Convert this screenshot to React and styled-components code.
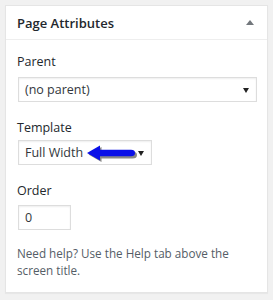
import React from 'react';
import styled, { createGlobalStyle } from 'styled-components';

const GlobalStyle = createGlobalStyle`
  body {
    margin: 0;
    background: #f1f1f1;
    font-family: "Open Sans", "Noto Sans", sans-serif;
    color: #444;
  }
`;

const Page = styled.div`
  padding: 5px 5px 0 5px;
  height: 300px;
  box-sizing: border-box;
`;

const Postbox = styled.div`
  background: #fff;
  border: 1px solid #e5e5e5;
  box-shadow: 0 1px 1px rgba(0, 0, 0, 0.04);
  width: 263px;
  box-sizing: border-box;
`;

const Header = styled.div`
  display: flex;
  align-items: center;
  justify-content: space-between;
  height: 33px;
  padding: 0 12px 0 11px;
  border-bottom: 1px solid #eee;
`;

const Title = styled.h2`
  margin: 0;
  font-size: 13px;
  font-weight: 600;
  color: #23282d;
`;

const Toggle = styled.span`
  width: 0;
  height: 0;
  border-left: 4px solid transparent;
  border-right: 4px solid transparent;
  border-bottom: 5px solid #72777c;
  margin-right: 1px;
`;

const Inside = styled.div`
  padding: 13px 11px 13px 12px;
`;

const Label = styled.p`
  margin: ${(p) => p.$top || 0}px 0 ${(p) => p.$bottom || 7}px -1px;
  font-size: 12.5px;
  line-height: 18px;
  color: #23282d;
`;

const FieldWrap = styled.div`
  position: relative;
  width: ${(p) => p.$width}px;
`;

const Select = styled.div`
  display: flex;
  align-items: center;
  justify-content: space-between;
  width: ${(p) => p.$width}px;
  height: 25px;
  box-sizing: border-box;
  border: 1px solid #ddd;
  box-shadow: inset 0 1px 2px rgba(0, 0, 0, 0.07);
  padding: 0 7px 0 6px;
  font-size: 12.5px;
  color: #32373c;
  background: #fff;
`;

const Caret = styled.span`
  width: 0;
  height: 0;
  border-left: 3px solid transparent;
  border-right: 3px solid transparent;
  border-top: 5px solid #222;
  margin-top: 1px;
`;

const Input = styled.div`
  width: 53px;
  height: 25px;
  box-sizing: border-box;
  border: 1px solid #ddd;
  box-shadow: inset 0 1px 2px rgba(0, 0, 0, 0.07);
  padding: 0 6px;
  display: flex;
  align-items: center;
  font-size: 12.5px;
  color: #32373c;
`;

const Help = styled.p`
  margin: 15px 0 0 -1px;
  font-size: 11.7px;
  line-height: 17px;
  color: #555d66;
`;

const Pointer = styled.svg`
  position: absolute;
  left: 67px;
  top: 4px;
`;

const BlueArrow = () => (
  <Pointer width="54" height="21" viewBox="0 0 54 21">
    <path
      d="M2 9 L15 1.5 L15 6 L46 6 Q50.5 6 50.5 9.5 Q50.5 13 46 13 L15 13 L15 16.5 Z"
      fill="#111"
      opacity="0.5"
      transform="translate(1.5 1.5)"
    />
    <path
      d="M2 9 L15 1.5 L15 5.8 L46 5.8 Q50 5.8 50 9 Q50 12.2 46 12.2 L15 12.2 L15 16.5 Z"
      fill="#0a10e8"
    />
  </Pointer>
);

const App = () => (
  <Page>
    <GlobalStyle />
    <Postbox>
      <Header>
        <Title>Page Attributes</Title>
        <Toggle />
      </Header>
      <Inside>
        <Label $bottom={6}>Parent</Label>
        <Select $width={239}>
          <span>(no parent)</span>
          <Caret />
        </Select>
        <Label $top={17} $bottom={3}>Template</Label>
        <FieldWrap $width={134}>
          <Select $width={134}>
            <span>Full Width</span>
            <Caret />
          </Select>
          <BlueArrow />
        </FieldWrap>
        <Label $top={17} $bottom={5}>Order</Label>
        <Input>0</Input>
        <Help>Need help? Use the Help tab above the screen title.</Help>
      </Inside>
    </Postbox>
  </Page>
);

export default App;
